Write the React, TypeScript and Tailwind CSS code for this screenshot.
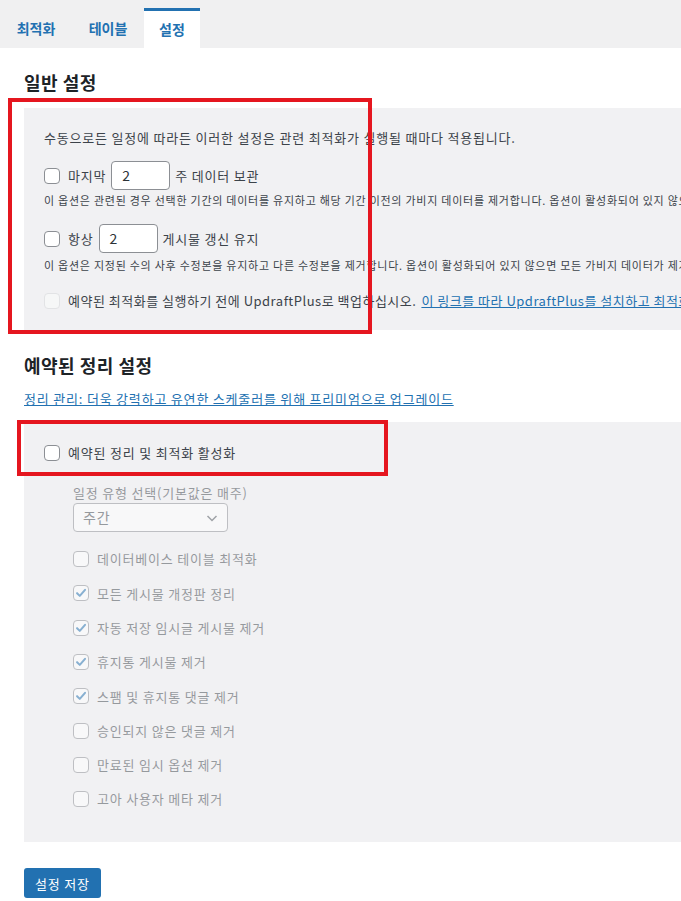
import React from 'react';

const FONT = 'font-["Noto_Sans_CJK_KR","Noto_Sans",sans-serif]';

const Box = ({ checked = false, faint = false }: { checked?: boolean; faint?: boolean }) => (
  <span
    className={`inline-flex h-4 w-4 shrink-0 items-center justify-center rounded-[4px] border ${
      faint ? 'border-[#e2e3e5] bg-[#f6f7f7]' : 'border-[#8c8f94] bg-white'
    }`}
  >
    {checked && (
      <svg width="14" height="14" viewBox="0 0 16 16">
        <path d="M3.5 8.2 L6.6 11.3 L12.6 4.4" fill="none" stroke="#2271b1" strokeWidth="2.3" strokeLinecap="round" strokeLinejoin="round" />
      </svg>
    )}
  </span>
);

const NumInput = ({ value }: { value: string }) => (
  <span className="mx-[5px] inline-flex h-[29px] w-[59px] items-center rounded-[4px] border border-[#8c8f94] bg-white px-[10px] text-[14px] text-[#2c3338]">
    {value}
  </span>
);

const tabs = [
  { label: '최적화', active: false },
  { label: '테이블', active: false },
  { label: '설정', active: true },
];

const scheduled = [
  { label: '데이터베이스 테이블 최적화', checked: false },
  { label: '모든 게시물 개정판 정리', checked: true },
  { label: '자동 저장 임시글 게시물 제거', checked: true },
  { label: '휴지통 게시물 제거', checked: true },
  { label: '스팸 및 휴지통 댓글 제거', checked: true },
  { label: '승인되지 않은 댓글 제거', checked: false },
  { label: '만료된 임시 옵션 제거', checked: false },
  { label: '고아 사용자 메타 제거', checked: false },
];

export default function App() {
  return (
    <div className={`h-[901px] w-[681px] overflow-hidden bg-white text-[13px] tracking-[0.8px] text-[#3c434a] ${FONT}`}>
      {/* tab bar */}
      <nav className="flex h-12 items-end bg-[#f0f0f1] tracking-normal">
        {tabs.map(t => (
          <div
            key={t.label}
            className={`flex h-[40px] items-center text-[14px] font-semibold text-[#2271b1] ${
              t.active ? 'border-t-[3px] border-[#2271b1] bg-white px-[15px]' : 'w-[72px] justify-center'
            }`}
          >
            {t.label}
          </div>
        ))}
      </nav>

      <div className="pl-6">
        <h2 className="mt-[22px] h-6 text-[18px] font-bold leading-6 tracking-[0.5px] text-[#1d2327]">일반 설정</h2>

        {/* general settings panel */}
        <div className="relative mt-[14px] w-[900px] bg-[#f1f1f3] pb-[19px] pl-5 pt-5 whitespace-nowrap">
          <p className="leading-5">수동으로든 일정에 따라든 이러한 설정은 관련 최적화가 실행될 때마다 적용됩니다.</p>

          <div className="mt-[13px] flex h-[29px] items-center">
            <Box />
            <span className="ml-2">마지막</span>
            <NumInput value="2" />
            <span>주 데이터 보관</span>
          </div>
          <p className="mt-[2px] text-[11px] leading-4 tracking-[0.75px]">
            이 옵션은 관련된 경우 선택한 기간의 데이터를 유지하고 해당 기간 이전의 가비지 데이터를 제거합니다. 옵션이 활성화되어 있지 않으면 모든 가비지 데이터가 제거됩니다.
          </p>

          <div className="mt-[16px] flex h-[29px] items-center">
            <Box />
            <span className="ml-2">항상</span>
            <NumInput value="2" />
            <span>게시물 갱신 유지</span>
          </div>
          <p className="mt-[4px] text-[11px] leading-4 tracking-[0.75px]">
            이 옵션은 지정된 수의 사후 수정본을 유지하고 다른 수정본을 제거합니다. 옵션이 활성화되어 있지 않으면 모든 가비지 데이터가 제거됩니다.
          </p>

          <div className="mt-[18px] flex h-5 items-center tracking-[0.5px]">
            <Box faint />
            <span className="ml-2">예약된 최적화를 실행하기 전에 UpdraftPlus로 백업하십시오.</span>
            <a className="ml-[5px] text-[#2271b1] underline">이 링크를 따라 UpdraftPlus를 설치하고 최적화 전에 백업하십시오.</a>
          </div>

          {/* annotation */}
          <div className="pointer-events-none absolute left-[-16px] top-[-10px] h-[236px] w-[364px] border-[4px] border-[#e5161f]" />
        </div>

        <h2 className="mt-[23px] h-6 text-[18px] font-bold leading-6 tracking-[0.5px] text-[#1d2327]">예약된 정리 설정</h2>
        <a className="mt-3 block leading-5 text-[#2271b1] underline">
          정리 관리: 더욱 강력하고 유연한 스케줄러를 위해 프리미엄으로 업그레이드
        </a>

        {/* scheduled cleanup panel */}
        <div className="relative mt-[13px] w-[900px] bg-[#f1f1f3] pb-[26px] pl-5 pt-[21px] whitespace-nowrap">
          <div className="flex h-5 items-center">
            <Box />
            <span className="ml-2">예약된 정리 및 최적화 활성화</span>
          </div>

          <div className="ml-[29px] opacity-50">
            <p className="mt-5 leading-5">일정 유형 선택(기본값은 매주)</p>
            <div className="flex h-[29px] w-[155px] items-center justify-between rounded-[4px] border border-[#8c8f94] bg-white pl-[9px] pr-[7px] text-[14px]">
              <span>주간</span>
              <svg width="16" height="16" viewBox="0 0 16 16">
                <path d="M3.5 6 L8 10.5 L12.5 6" fill="none" stroke="#50575e" strokeWidth="1.5" />
              </svg>
            </div>

            <div className="mt-[10px] flex flex-col">
              {scheduled.map(s => (
                <div key={s.label} className="flex h-[34.3px] items-center">
                  <Box checked={s.checked} />
                  <span className="ml-2">{s.label}</span>
                </div>
              ))}
            </div>
          </div>

          {/* annotation */}
          <div className="pointer-events-none absolute left-[-7px] top-[-2px] h-[56px] w-[371px] border-[4px] border-[#e5161f]" />
        </div>

        <button className="mt-[26px] h-[30px] rounded-[3px] bg-[#2271b1] px-[11px] text-[13px] text-white">
          설정 저장
        </button>
      </div>
    </div>
  );
}
